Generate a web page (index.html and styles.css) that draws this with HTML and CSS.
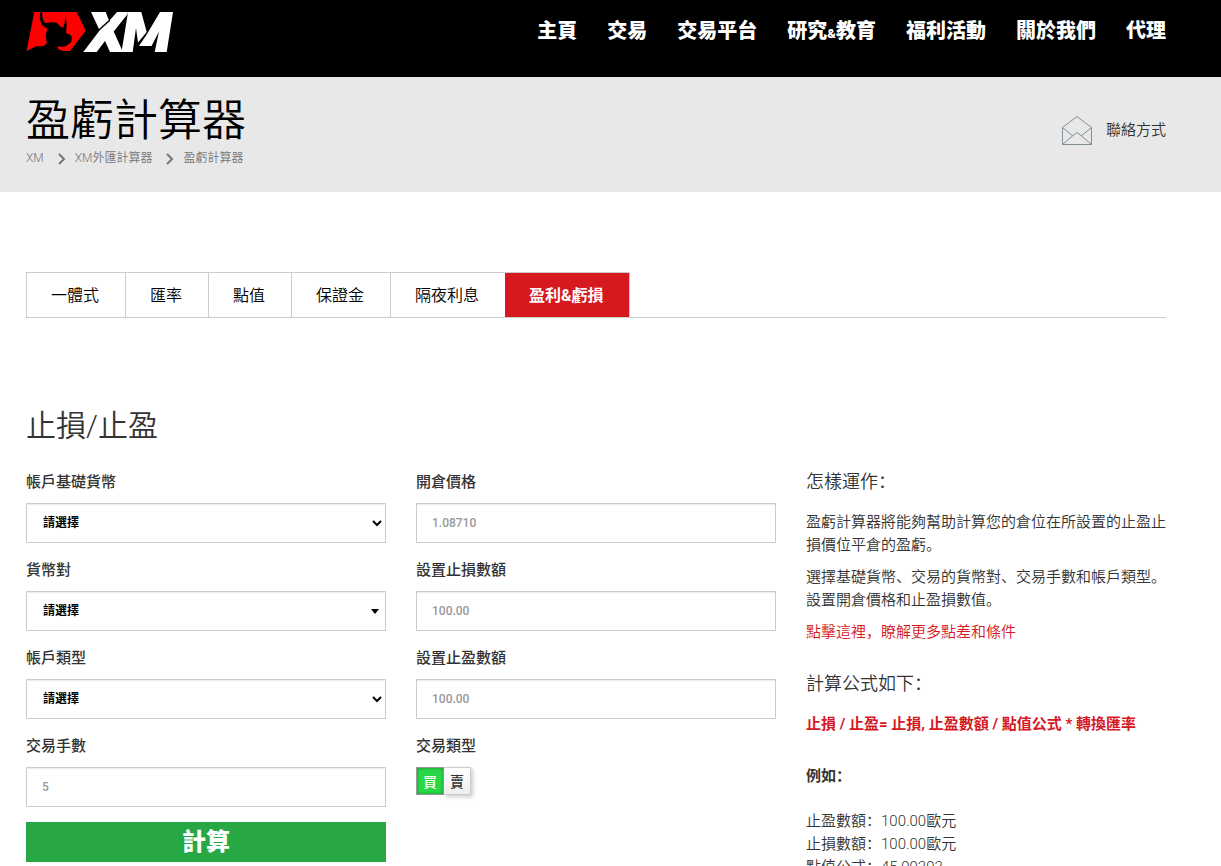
FILE: index.html
```html
<!DOCTYPE html>
<html lang="zh-CN">
<head>
  <meta charset="UTF-8" />
  <meta name="viewport" content="width=device-width, initial-scale=1.0"/>
  <title>盈虧計算器</title>
  <link rel="stylesheet" href="styles.css">
</head>

<body>
  <header class="site-header">
    <div class="container header-row">
      <a class="logo" href="#" aria-label="XM">
        <svg width="148" height="42" viewBox="0 0 148 42" xmlns="http://www.w3.org/2000/svg">
          <!-- Red badge around the bull's head -->
          <g fill="#f00">
            <path d="M0.5 40 L8.3 1 H14.5 C13.5 5 13.6 8 14.3 10 C15 13 17 16 21.3 17.3 L19.7 24.7 L20.7 31.7 L19 34.3 C16 36 13 35 10.7 35 Z"/>
            <path d="M16.3 1 H50.7 L59.7 19.7 L44 40 H37.3 L32.7 38.5 L31.3 36.3 L33 35 C36 36.5 39 36 41 34.3 L45.3 31 L45.8 26.5 L44.7 24 L40 22 L40.8 13 L39.7 4.5 L38.7 12.3 L37.3 16.7 L34 15.3 L31.3 12.3 C29 10.8 26 11 24 11.5 L19.3 12 C17 10 16 6 16.3 1 Z"/>
          </g>
          <!-- X and M strokes -->
          <g fill="#fff">
            <polygon points="65,1 79.7,1 82.8,9 73,18"/>
            <polygon points="84,10 94,1 101.7,1 101.7,3 87.7,20.5 96,39 96,41 84,41 79,30 70.7,41 57.3,41 74,19"/>
            <polygon points="101.7,1 115.3,1 120.7,21 112,31.5 110,17 106.7,41 95.5,41 101.7,3"/>
            <polygon points="134,1 147,1 140.7,41 128.7,41 133,20.5 125.5,35 113,35 121,23"/>
            <polygon points="91,1 96,1 84,12 84,9"/>
          </g>
        </svg>
      </a>
      <nav class="main-nav">
        <a href="#">主頁</a>
        <a href="#">交易</a>
        <a href="#">交易平台</a>
        <a href="#">研究<span class="amp">&amp;</span>教育</a>
        <a href="#">福利活動</a>
        <a href="#">關於我們</a>
        <a href="#">代理</a>
      </nav>
    </div>
  </header>

  <section class="page-title">
    <div class="container title-row">
      <div>
        <h1>盈虧計算器</h1>
        <nav class="breadcrumb">
          <a href="#">XM</a>
          <svg class="chevron" viewBox="0 0 8 12"><path d="M1 1 L6 6 L1 11"/></svg>
          <a href="#">XM外匯計算器</a>
          <svg class="chevron" viewBox="0 0 8 12"><path d="M1 1 L6 6 L1 11"/></svg>
          <span>盈虧計算器</span>
        </nav>
      </div>
      <a class="contact" href="#">
        <svg width="30" height="30" viewBox="0 0 30 30" fill="none" stroke="#7f8f95" xmlns="http://www.w3.org/2000/svg">
          <path d="M0.5 11.5 L15 0.5 L29.5 11.5 V28.5 H0.5 Z"/>
          <path d="M0.5 11.5 L11 20 M29.5 11.5 L19 20 M0.5 28.5 L11 19.5 L15 16.5 L19 19.5 L29.5 28.5"/>
        </svg>
        聯絡方式
      </a>
    </div>
  </section>

  <main class="container">
    <nav class="tabs">
      <a href="#">一體式</a>
      <a href="#">匯率</a>
      <a href="#">點值</a>
      <a href="#">保證金</a>
      <a href="#">隔夜利息</a>
      <a class="active" href="#">盈利&amp;虧損</a>
    </nav>

    <h2>止損/止盈</h2>

    <form class="calculator">
      <div class="column">
        <label for="base">帳戶基礎貨幣</label>
        <select class="control" id="base"><option>請選擇</option></select>

        <label for="pair">貨幣對</label>
        <select class="control caret" id="pair"><option>請選擇</option></select>

        <label for="account">帳戶類型</label>
        <select class="control" id="account"><option>請選擇</option></select>

        <label for="lots">交易手數</label>
        <input class="control" type="text" id="lots" placeholder="5">

        <button class="submit" type="button">計算</button>
      </div>

      <div class="column">
        <label for="open">開倉價格</label>
        <input class="control" type="text" id="open" placeholder="1.08710">

        <label for="stop">設置止損數額</label>
        <input class="control" type="text" id="stop" placeholder="100.00">

        <label for="profit">設置止盈數額</label>
        <input class="control" type="text" id="profit" placeholder="100.00">

        <fieldset class="trade-type">
          <legend>交易類型</legend>
          <input type="radio" name="type" id="buy" checked>
          <label for="buy">買</label>
          <input type="radio" name="type" id="sell">
          <label for="sell">賣</label>
        </fieldset>
      </div>

      <aside class="info">
        <h3>怎樣運作：</h3>
        <p>盈虧計算器將能夠幫助計算您的倉位在所設置的止盈止損價位平倉的盈虧。</p>
        <p>選擇基礎貨幣、交易的貨幣對、交易手數和帳戶類型。設置開倉價格和止盈損數值。</p>
        <p><a href="#">點擊這裡，瞭解更多點差和條件</a></p>

        <h3 class="formula-title">計算公式如下：</h3>
        <p class="formula">止損 / 止盈= 止損, 止盈數額 / 點值公式 * 轉換匯率</p>

        <p class="example-title">例如：</p>
        <p>止盈數額：100.00歐元<br>止損數額：100.00歐元<br>點值公式：45.99393</p>
      </aside>
    </form>
  </main>
</body>
</html>
```
FILE: styles.css
```css
* {
  margin: 0;
  padding: 0;
  box-sizing: border-box;
}
body {
  font-family: Roboto, "Noto Sans CJK SC", sans-serif;
  font-size: 15px;
  font-weight: 350;
  line-height: 23px;
  color: #333;
  background: #fff;
}
a {
  color: inherit;
  text-decoration: none;
}
.container {
  padding: 0 55px 0 26px;
}

/* Top bar */
.site-header {
  background: #000;
}
.header-row {
  display: flex;
  justify-content: space-between;
  height: 77px;
}
.logo {
  padding-top: 11px;
}
.logo svg {
  display: block;
}
.main-nav {
  display: flex;
  gap: 30px;
  padding-top: 16px;
  font-size: 20px;
  font-weight: 900;
  line-height: 30px;
  color: #fff;
}
.amp {
  font-size: 13px;
}

/* Grey title band */
.page-title {
  background: #e8e8e8;
}
.title-row {
  display: flex;
  justify-content: space-between;
  padding-top: 20px;
  padding-bottom: 22px;
}
h1 {
  margin-bottom: 2px;
  font-size: 44px;
  font-weight: 350;
  line-height: 48px;
  color: #000;
}
.breadcrumb {
  display: flex;
  align-items: center;
  font-size: 12px;
  color: #777;
}
.chevron {
  width: 8px;
  height: 12px;
  margin: 0 9px 0 14px;
  fill: none;
  stroke: #777;
  stroke-width: 2;
}
.contact {
  display: flex;
  align-items: center;
  gap: 14px;
  height: 67px;
}

/* Tabs */
.tabs {
  display: flex;
  margin-top: 80px;
  border-bottom: 1px solid #ccc;
  font-size: 16px;
  color: #000;
}
.tabs a {
  padding: 1px 25px 0 24px;
  line-height: 43px;
  border-top: 1px solid #ccc;
  border-left: 1px solid #ccc;
}
.tabs a:not(.active) {
  padding-right: 26px;
}
.tabs .active {
  font-weight: 700;
  color: #fff;
  background: #d6181f;
  border-left: 0;
  border-right: 1px solid #ccc;
}

h2 {
  margin: 88px 0 24px;
  font-size: 30px;
  font-weight: 350;
  line-height: 40px;
}

/* Calculator form */
.calculator {
  display: grid;
  grid-template-columns: repeat(3, 1fr);
  gap: 30px;
}
.column > label,
legend {
  display: block;
  margin-bottom: 9px;
  font-weight: 500;
  line-height: 24px;
}
.control {
  display: block;
  width: 100%;
  height: 40px;
  margin-bottom: 15px;
  padding: 0 15px;
  font: inherit;
  font-size: 12px;
  font-weight: 700;
  color: #000;
  background: #fff;
  border: 1px solid #ccc;
  border-radius: 0;
  box-shadow: inset 0 1px 1px rgba(0, 0, 0, 0.08);
}
select.control {
  padding: 0 0 0 12px;
}
.control.caret {
  appearance: none;
  padding-left: 16px;
  background: #fff url("data:image/svg+xml,%3Csvg xmlns='http://www.w3.org/2000/svg' width='8' height='5'%3E%3Cpath d='M0 0h8L4 5z'/%3E%3C/svg%3E") no-repeat right 6px center;
}
.control::placeholder {
  font-weight: 500;
  color: #999;
}
.submit {
  display: block;
  width: 100%;
  height: 40px;
  font: inherit;
  font-size: 24px;
  font-weight: 900;
  color: #fff;
  background: #28a745;
  border: 0;
}

/* Buy / sell switch */
.trade-type {
  border: 0;
}
.trade-type input {
  position: absolute;
  opacity: 0;
}
.trade-type label {
  float: left;
  width: 27px;
  height: 28px;
  font-size: 14px;
  font-weight: 500;
  line-height: 28px;
  text-align: center;
  background: linear-gradient(#fff, #eee);
  border: 1px solid #ccc;
  border-left: 0;
  box-shadow: 2px 2px 4px rgba(0, 0, 0, 0.2);
}
.trade-type input:checked + label {
  position: relative;
  width: 28px;
  color: #fff;
  background: #28d745;
  border: 1px solid #999;
  box-shadow: inset 0 0 3px rgba(0, 0, 0, 0.4);
}

/* Right column */
.info h3 {
  margin-bottom: 18px;
  font-size: 18px;
  font-weight: 350;
}
.info p {
  margin-bottom: 9px;
}
.info a,
.info .formula {
  color: #d6181f;
}
.info .formula-title {
  margin-top: 28px;
}
.info .formula {
  margin-bottom: 29px;
  font-weight: 700;
}
.info .example-title {
  margin-bottom: 22px;
  font-weight: 700;
}
```
